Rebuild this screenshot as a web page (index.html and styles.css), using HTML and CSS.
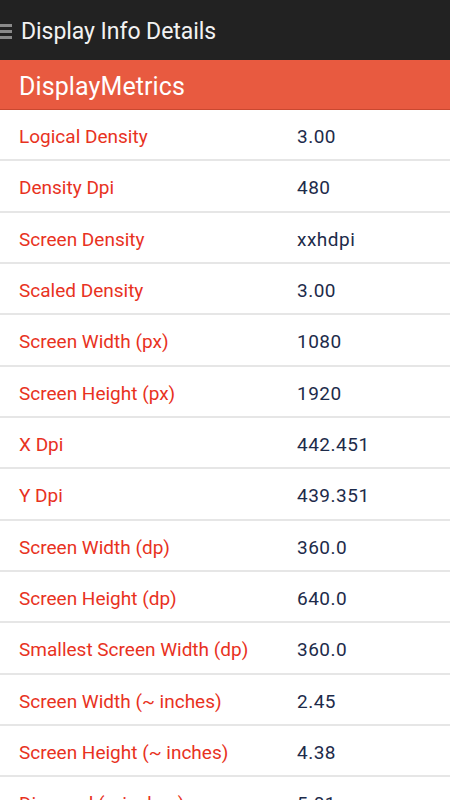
FILE: index.html
```html
<!DOCTYPE html>
<html>
<head>
<meta charset="utf-8">
<link rel="stylesheet" href="styles.css">
</head>
<body>
<div class="appbar">
  <svg class="menu" width="13" height="18" viewBox="0 0 13 18"><rect x="0" y="2" width="12" height="3" fill="#8a8a8a"/><rect x="0" y="8" width="12" height="3" fill="#8a8a8a"/><rect x="0" y="14" width="12" height="3" fill="#8a8a8a"/></svg>
  <span class="title">Display Info Details</span>
</div>
<div class="section">DisplayMetrics</div>
<div class="list">
  <div class="row"><span class="label">Logical Density</span><span class="value">3.00</span></div>
  <div class="row"><span class="label">Density Dpi</span><span class="value">480</span></div>
  <div class="row"><span class="label">Screen Density</span><span class="value">xxhdpi</span></div>
  <div class="row"><span class="label">Scaled Density</span><span class="value">3.00</span></div>
  <div class="row"><span class="label">Screen Width (px)</span><span class="value">1080</span></div>
  <div class="row"><span class="label">Screen Height (px)</span><span class="value">1920</span></div>
  <div class="row"><span class="label">X Dpi</span><span class="value">442.451</span></div>
  <div class="row"><span class="label">Y Dpi</span><span class="value">439.351</span></div>
  <div class="row"><span class="label">Screen Width (dp)</span><span class="value">360.0</span></div>
  <div class="row"><span class="label">Screen Height (dp)</span><span class="value">640.0</span></div>
  <div class="row"><span class="label">Smallest Screen Width (dp)</span><span class="value">360.0</span></div>
  <div class="row"><span class="label">Screen Width (~ inches)</span><span class="value">2.45</span></div>
  <div class="row"><span class="label">Screen Height (~ inches)</span><span class="value">4.38</span></div>
  <div class="row"><span class="label">Diagonal (~ inches)</span><span class="value">5.01</span></div>
</div>
</body>
</html>
```
FILE: styles.css
```css
html, body {
  margin: 0;
  padding: 0;
  background: #ffffff;
  font-family: Roboto, "Noto Sans", sans-serif;
  overflow: hidden;
  height: 800px;
}
.appbar {
  height: 60px;
  background: #222222;
  display: flex;
  align-items: center;
  box-sizing: border-box;
  padding-top: 2px;
}
.menu {
  display: block;
  margin-left: 0;
  margin-right: 8px;
  margin-top: -1px;
}
.title {
  color: #f2f2f2;
  font-size: 23px;
  letter-spacing: -0.05px;
}
.section {
  height: 50px;
  box-sizing: border-box;
  background: #e85a40;
  border-bottom: 1px solid #c94830;
  color: #ffffff;
  font-size: 25px;
  letter-spacing: 0.1px;
  padding-left: 19px;
  display: flex;
  align-items: center;
  padding-top: 3px;
}
.row {
  height: 51.33px;
  box-sizing: border-box;
  border-bottom: 2px solid #e6e6e6;
  display: flex;
  align-items: center;
  padding-top: 4px;
}
.label {
  width: 278px;
  padding-left: 19px;
  color: #e8321e;
  font-size: 19px;
}
.value {
  color: #1d2b4a;
  font-size: 19px;
  letter-spacing: 0.5px;
}
```
